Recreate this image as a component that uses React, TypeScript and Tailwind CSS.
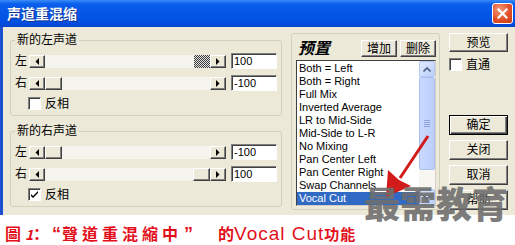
import React from 'react';

const presets = [
  'Both = Left',
  'Both = Right',
  'Full Mix',
  'Inverted Average',
  'LR to Mid-Side',
  'Mid-Side to L-R',
  'No Mixing',
  'Pan Center Left',
  'Pan Center Right',
  'Swap Channels',
  'Vocal Cut',
];

/* classic raised 3D box */
const raised =
  'border border-t-white border-l-white border-b-[#404040] border-r-[#404040] bg-[#ece9d8] shadow-[inset_-1px_-1px_#808080]';

function Arrow({ dir }: { dir: 'left' | 'right' }) {
  return (
    <div className={`flex h-[13px] w-[16px] shrink-0 items-center justify-center ${raised}`}>
      <svg width="4" height="7" viewBox="0 0 4 7">
        {dir === 'left' ? <path d="M4 0v7L0.5 3.5z" fill="#000" /> : <path d="M0 0v7l3.5-3.5z" fill="#000" />}
      </svg>
    </div>
  );
}

function HScroll({ thumb, focused }: { thumb: 'start' | 'end'; focused?: boolean }) {
  return (
    <div className="flex h-[13px] w-[197px] shrink-0">
      <Arrow dir="left" />
      <div className={`flex flex-1 bg-[#f4f3ee] ${thumb === 'end' ? 'justify-end' : 'justify-start'}`}>
        {focused ? (
          <div className="h-[13px] w-[16px] bg-[repeating-conic-gradient(#3a3a3a_0_25%,#e4e4e4_0_50%)] bg-[length:2px_2px]" />
        ) : (
          <div className={`h-[13px] w-[17px] ${raised}`} />
        )}
      </div>
      <Arrow dir="right" />
    </div>
  );
}

function TextBox({ value }: { value: string }) {
  return (
    <div className="ml-[5px] flex h-[16px] w-[46px] items-center border border-t-[#808080] border-l-[#808080] border-b-white border-r-white bg-white pl-[2px] text-[11px] leading-none text-black shadow-[inset_1px_1px_#404040]">
      {value}
    </div>
  );
}

function CheckBox({ checked }: { checked?: boolean }) {
  return (
    <div className="flex h-[13px] w-[13px] shrink-0 items-center justify-center border border-t-[#808080] border-l-[#808080] border-b-white border-r-white bg-white shadow-[inset_1px_1px_#404040]">
      {checked && (
        <svg width="7" height="7" viewBox="0 0 7 7">
          <path d="M0 3l2 2 5-5v2L2 7 0 5z" fill="#000" />
        </svg>
      )}
    </div>
  );
}

function Slider({ label, value, thumb, focused }: { label: string; value: string; thumb: 'start' | 'end'; focused?: boolean }) {
  return (
    <div className="flex h-[16px] items-center">
      <span className="w-[14px] shrink-0 text-[12px] leading-none">{label}</span>
      <HScroll thumb={thumb} focused={focused} />
      <TextBox value={value} />
    </div>
  );
}

function ChannelGroup({ title, left, right, invert }: {
  title: string;
  left: { value: string; thumb: 'start' | 'end'; focused?: boolean };
  right: { value: string; thumb: 'start' | 'end' };
  invert?: boolean;
}) {
  return (
    <fieldset className="rounded-[3px] border border-[#d0d0bf] px-[4px] pb-[5px] pt-[6px]">
      <legend className="px-[2px] text-[12px] leading-[14px]">{title}</legend>
      <div className="flex flex-col gap-[6px]">
        <Slider label="左" {...left} />
        <Slider label="右" {...right} />
        <div className="ml-[13px] flex h-[13px] items-center gap-[4px]">
          <CheckBox checked={invert} />
          <span className="text-[12px] leading-none">反相</span>
        </div>
      </div>
    </fieldset>
  );
}

function Btn({ children, isDefault, className = '' }: { children: React.ReactNode; isDefault?: boolean; className?: string }) {
  return (
    <div
      className={`flex items-center justify-center text-[12px] leading-none ${
        isDefault
          ? 'border border-black bg-[#ece9d8] shadow-[inset_1px_1px_white,inset_-1px_-1px_#404040,inset_-2px_-2px_#808080]'
          : raised
      } ${className}`}
    >
      {children}
    </div>
  );
}

function ListScroll() {
  return (
    <div className="flex w-[16px] shrink-0 flex-col bg-[#f7f6f1]">
      <div className="flex h-[16px] items-center justify-center rounded-[2px] border border-[#b4c8f6] bg-[linear-gradient(135deg,#e0e9fe,#bcd0fa)]">
        <svg width="8" height="5" viewBox="0 0 8 5">
          <path d="M0.5 4.5L4 1l3.5 3.5" fill="none" stroke="#4d6185" strokeWidth="1.6" />
        </svg>
      </div>
      <div className="flex h-[93px] flex-col items-center justify-center gap-[1px] rounded-[2px] border border-[#a9c0f2] bg-[linear-gradient(90deg,#cad8fd,#bccffb)]">
        <div className="h-[1px] w-[6px] bg-[#8ea6e0]" />
        <div className="h-[1px] w-[6px] bg-[#8ea6e0]" />
        <div className="h-[1px] w-[6px] bg-[#8ea6e0]" />
        <div className="h-[1px] w-[6px] bg-[#8ea6e0]" />
      </div>
      <div className="flex-1" />
      <div className="flex h-[16px] items-center justify-center rounded-[2px] border border-[#b4c8f6] bg-[linear-gradient(135deg,#e0e9fe,#bcd0fa)]">
        <svg width="8" height="5" viewBox="0 0 8 5">
          <path d="M0.5 0.5L4 4l3.5-3.5" fill="none" stroke="#4d6185" strokeWidth="1.6" />
        </svg>
      </div>
    </div>
  );
}

export default function App() {
  return (
    <div className="relative flex h-[245px] w-[515px] flex-col overflow-hidden bg-white font-['Liberation_Sans','Noto_Sans_CJK_SC',sans-serif] text-black">
      {/* dialog window */}
      <div className="flex h-[215px] flex-col">
        {/* title bar */}
        <div className="flex h-[27px] shrink-0 items-center bg-[linear-gradient(180deg,#3b8cf7_0%,#0b5fea_14%,#0556e8_45%,#0251e2_80%,#0345cf_100%)]">
          <span className="ml-[7px] text-[14px] font-bold leading-none text-white [text-shadow:1px_1px_#11338f]">
            声道重混缩
          </span>
          <div className="ml-auto mr-[2px] flex h-[21px] w-[21px] items-center justify-center rounded-[3px] border border-white bg-[radial-gradient(circle_at_35%_30%,#f39a7c,#e2502a_55%,#c53a18)]">
            <svg width="11" height="11" viewBox="0 0 11 11">
              <path d="M1.5 1.5l8 8M9.5 1.5l-8 8" stroke="#fff" strokeWidth="2.2" strokeLinecap="square" />
            </svg>
          </div>
        </div>

        {/* body */}
        <div className="flex flex-1 border-l-[3px] border-[#1d4fd0] bg-[#ece9d8] pl-[7px] pt-[6px]">
          {/* left column */}
          <div className="flex w-[272px] shrink-0 flex-col gap-[8px]">
            <ChannelGroup
              title="新的左声道"
              left={{ value: '100', thumb: 'end', focused: true }}
              right={{ value: '-100', thumb: 'start' }}
            />
            <ChannelGroup
              title="新的右声道"
              left={{ value: '-100', thumb: 'start' }}
              right={{ value: '100', thumb: 'end' }}
              invert
            />
          </div>

          {/* presets */}
          <div className="ml-[9px] flex h-[177px] w-[149px] shrink-0 flex-col rounded-[3px] border border-[#d0d0bf] pb-[3px] pl-[4px] pr-[3px] pt-[6px]">
            <div className="flex h-[17px] items-center">
              <span className="ml-[2px] text-[16px] font-bold italic leading-none">预置</span>
              <div className="ml-auto flex gap-[3px]">
                <Btn className="h-[17px] w-[36px]">增加</Btn>
                <Btn className="h-[17px] w-[36px]">删除</Btn>
              </div>
            </div>
            <div className="mt-[3px] flex h-[146px] border border-t-[#404040] border-l-[#404040] border-b-[#d4d0c8] border-r-[#d4d0c8] bg-white">
              <ul className="flex-1 pt-[1px] text-[11px] leading-[13px]">
                {presets.map((p) => (
                  <li
                    key={p}
                    className={`h-[13px] whitespace-nowrap pl-[2px] ${p === 'Vocal Cut' ? 'bg-[#316ac5] text-white' : ''}`}
                  >
                    {p}
                  </li>
                ))}
              </ul>
              <ListScroll />
            </div>
          </div>

          {/* right buttons */}
          <div className="ml-[9px] flex w-[59px] shrink-0 flex-col">
            <Btn className="h-[19px]">预览</Btn>
            <div className="mt-[6px] flex h-[13px] items-center gap-[4px]">
              <CheckBox />
              <span className="text-[12px] leading-none">直通</span>
            </div>
            <div className="mt-[44px] flex flex-col gap-[5px]">
              <Btn isDefault className="h-[20px]">确定</Btn>
              <Btn className="h-[20px]">关闭</Btn>
              <Btn className="h-[20px]">取消</Btn>
              <Btn className="h-[20px]">帮助</Btn>
            </div>
          </div>
        </div>
      </div>

      {/* caption */}
      <div className="flex h-[30px] items-baseline whitespace-nowrap pl-[5px] pt-[5px] font-['Noto_Sans_CJK_TC',sans-serif] text-[16px] font-bold text-[#e3101b]">
        <span className="inline-block w-[20px]">圖</span>
        <span className="inline-block w-[8px] text-[14px] italic">1</span>
        <span className="ml-[1px] inline-flex w-[6px] justify-center">：</span>
        <span className="ml-[12px] inline-block w-[10px] font-['Liberation_Sans',sans-serif] text-[18px]">“</span>
        <span className="tracking-[4px]">聲道重混縮中</span>
        <span className="ml-[2px] inline-block w-[10px] font-['Liberation_Sans',sans-serif] text-[18px]">”</span>
        <span className="ml-[24px]">的</span>
        <span className="font-['Liberation_Sans',sans-serif] text-[19px] font-normal tracking-[1px]">Vocal Cut</span>
        <span className="text-[15px] tracking-[1px]">功能</span>
      </div>

      {/* red annotation arrow */}
      <svg className="pointer-events-none absolute left-0 top-0" width="515" height="245">
        <line x1="428" y1="136" x2="400" y2="178" stroke="#d21c1c" strokeWidth="3" />
        <path d="M386 197 L388 170 L399 180 L411 186 Z" fill="#d21c1c" />
      </svg>

      {/* watermark */}
      <div className="pointer-events-none absolute left-[364px] top-[180px] font-['Noto_Sans_CJK_SC',sans-serif] text-[36px] font-black leading-[44px] text-[#6f6f6f] opacity-90">
        最需教育
      </div>
    </div>
  );
}
